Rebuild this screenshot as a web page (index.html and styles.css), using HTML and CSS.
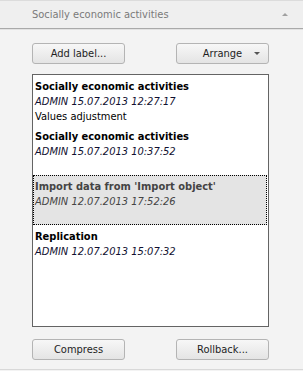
FILE: index.html
```html
<!DOCTYPE html>
<html lang="en">
<head>
<meta charset="UTF-8">
<title>History</title>
<link rel="stylesheet" href="styles.css">
</head>
<body>
    <div class="panel-header">
        <span class="panel-title">Socially economic activities</span>
        <span class="caret-up"></span>
    </div>

    <div class="content">
        <div class="button-row">
            <button class="btn">Add label...</button>
            <button class="btn btn-menu">Arrange <span class="caret-down"></span></button>
        </div>

        <div class="history-list">
            <div class="history-item">
                <div class="item-title">Socially economic activities</div>
                <div class="item-date">ADMIN 15.07.2013 12:27:17</div>
                <div class="item-note">Values adjustment</div>
            </div>
            <div class="history-item">
                <div class="item-title">Socially economic activities</div>
                <div class="item-date">ADMIN 15.07.2013 10:37:52</div>
            </div>
            <div class="history-item selected">
                <div class="item-title">Import data from 'Import object'</div>
                <div class="item-date">ADMIN 12.07.2013 17:52:26</div>
            </div>
            <div class="history-item">
                <div class="item-title">Replication</div>
                <div class="item-date">ADMIN 12.07.2013 15:07:32</div>
            </div>
        </div>

        <div class="button-row bottom">
            <button class="btn">Compress</button>
            <button class="btn">Rollback...</button>
        </div>
    </div>
    <div class="footer-line"></div>
</body>
</html>
```

FILE: styles.css
```css
body {
    margin: 0;
    background: #f3f3f3;
    font-family: Tahoma, "DejaVu Sans Condensed", "DejaVu Sans", sans-serif;
    font-size: 11px;
    color: #000;
    height: 371px;
    overflow: hidden;
}

.panel-header {
    height: 29px;
    box-sizing: border-box;
    border-top: 1px solid #dcdcdc;
    border-bottom: 1px solid #a9a9a9;
    background: #efefef;
    display: flex;
    align-items: center;
    justify-content: space-between;
    padding: 0 15px 0 32px;
    box-shadow: 0 1px 0 #e2e2e2;
}

.panel-title {
    color: #7a7a7a;
    font-size: 11px;
}

.caret-up {
    width: 0;
    height: 0;
    border-left: 3px solid transparent;
    border-right: 3px solid transparent;
    border-bottom: 3px solid #a0a0a0;
}

.content {
    width: 237px;
    margin-left: 32px;
    padding-top: 14px;
}

.button-row {
    display: flex;
    justify-content: space-between;
}

.button-row.bottom {
    margin-top: 12px;
}

.btn {
    width: 93px;
    height: 21px;
    padding: 0;
    border: 1px solid #b4b4b4;
    border-radius: 3px;
    background: linear-gradient(#f7f7f7, #e4e4e4);
    font-family: inherit;
    font-size: 11px;
    color: #1e1e1e;
}

.btn-menu {
    position: relative;
}

.caret-down {
    position: absolute;
    right: 8px;
    top: 8px;
    width: 0;
    height: 0;
    border-left: 3px solid transparent;
    border-right: 3px solid transparent;
    border-top: 3px solid #555;
}

.history-list {
    margin-top: 10px;
    height: 253px;
    box-sizing: border-box;
    border: 1px solid #646464;
    background: #fff;
    padding: 0 1px 0 0;
}

.history-item {
    height: 50px;
    box-sizing: border-box;
    padding: 4px 3px 0 2px;
    line-height: 15px;
}

.history-item.selected {
    background: #e4e4e4;
    outline: 1px dotted #000;
    outline-offset: -1px;
    color: #444;
}

.item-title {
    font-weight: bold;
}

.item-date {
    font-style: italic;
    color: #101030;
}

.selected .item-date {
    color: #444;
}

.footer-line {
    margin-top: 9px;
    border-top: 1px solid #d8d8d8;
}
```
